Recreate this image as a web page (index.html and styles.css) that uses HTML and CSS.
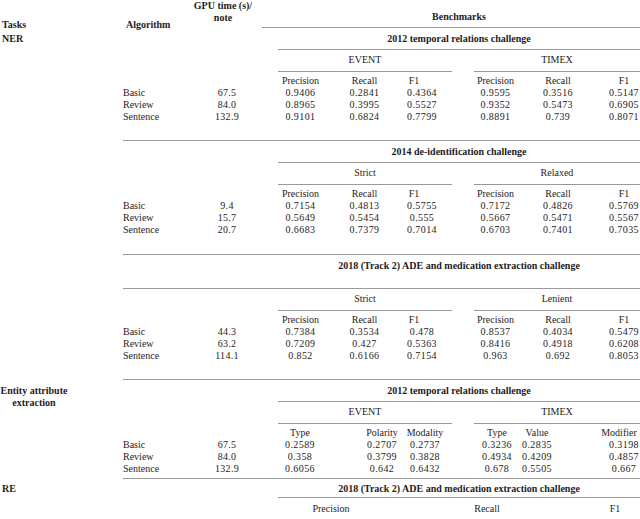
FILE: index.html
```html
<!DOCTYPE html>
<html lang="en">
<head>
<meta charset="utf-8">
<title>Benchmarks</title>
<link rel="stylesheet" href="styles.css">
</head>
<body>
<div class="tbl">
  <div class="head">
    <div class="h-task">Tasks</div>
    <div class="h-algo">Algorithm</div>
    <div class="h-gpu">GPU time (s)/<br>note</div>
    <div class="h-bench">Benchmarks</div>
  </div>

  <section class="block">
    <div class="grid cols-a pt2 pb17">
      <div class="task">NER</div>
      <div class="title line">2012 temporal relations challenge</div>
      <div class="group ga">EVENT</div>
      <div class="group gb">TIMEX</div>
      <div class="ch c1">Precision</div><div class="ch c2">Recall</div><div class="ch c3 f1h">F1</div>
      <div class="ch c4">Precision</div><div class="ch c5">Recall</div><div class="ch c6">F1</div>
      <div class="alg">Basic</div><div class="gpu">67.5</div>
      <div class="v c1">0.9406</div><div class="v c2">0.2841</div><div class="v c3">0.4364</div>
      <div class="v c4">0.9595</div><div class="v c5">0.3516</div><div class="v c6">0.5147</div>
      <div class="alg">Review</div><div class="gpu">84.0</div>
      <div class="v c1">0.8965</div><div class="v c2">0.3995</div><div class="v c3">0.5527</div>
      <div class="v c4">0.9352</div><div class="v c5">0.5473</div><div class="v c6">0.6905</div>
      <div class="alg">Sentence</div><div class="gpu">132.9</div>
      <div class="v c1">0.9101</div><div class="v c2">0.6824</div><div class="v c3">0.7799</div>
      <div class="v c4">0.8891</div><div class="v c5">0.739</div><div class="v c6">0.8071</div>
    </div>
  </section>

  <section class="block">
    <div class="rule"></div>
    <div class="grid cols-a pt5 pb18">
      <div class="title line">2014 de-identification challenge</div>
      <div class="group ga">Strict</div>
      <div class="group gb">Relaxed</div>
      <div class="ch c1">Precision</div><div class="ch c2">Recall</div><div class="ch c3 f1h">F1</div>
      <div class="ch c4">Precision</div><div class="ch c5">Recall</div><div class="ch c6">F1</div>
      <div class="alg">Basic</div><div class="gpu">9.4</div>
      <div class="v c1">0.7154</div><div class="v c2">0.4813</div><div class="v c3">0.5755</div>
      <div class="v c4">0.7172</div><div class="v c5">0.4826</div><div class="v c6">0.5769</div>
      <div class="alg">Review</div><div class="gpu">15.7</div>
      <div class="v c1">0.5649</div><div class="v c2">0.5454</div><div class="v c3">0.555</div>
      <div class="v c4">0.5667</div><div class="v c5">0.5471</div><div class="v c6">0.5567</div>
      <div class="alg">Sentence</div><div class="gpu">20.7</div>
      <div class="v c1">0.6683</div><div class="v c2">0.7379</div><div class="v c3">0.7014</div>
      <div class="v c4">0.6703</div><div class="v c5">0.7401</div><div class="v c6">0.7035</div>
    </div>
  </section>

  <section class="block">
    <div class="rule"></div>
    <div class="grid cols-a pt5 pb17">
      <div class="title">2018 (Track 2) ADE and medication extraction challenge</div>
      <div class="mid-rule"></div>
      <div class="group ga">Strict</div>
      <div class="group gb">Lenient</div>
      <div class="ch c1">Precision</div><div class="ch c2">Recall</div><div class="ch c3 f1h">F1</div>
      <div class="ch c4">Precision</div><div class="ch c5">Recall</div><div class="ch c6">F1</div>
      <div class="alg">Basic</div><div class="gpu">44.3</div>
      <div class="v c1">0.7384</div><div class="v c2">0.3534</div><div class="v c3">0.478</div>
      <div class="v c4">0.8537</div><div class="v c5">0.4034</div><div class="v c6">0.5479</div>
      <div class="alg">Review</div><div class="gpu">63.2</div>
      <div class="v c1">0.7209</div><div class="v c2">0.427</div><div class="v c3">0.5363</div>
      <div class="v c4">0.8416</div><div class="v c5">0.4918</div><div class="v c6">0.6208</div>
      <div class="alg">Sentence</div><div class="gpu">114.1</div>
      <div class="v c1">0.852</div><div class="v c2">0.6166</div><div class="v c3">0.7154</div>
      <div class="v c4">0.963</div><div class="v c5">0.692</div><div class="v c6">0.8053</div>
    </div>
  </section>

  <section class="block">
    <div class="rule"></div>
    <div class="grid cols-b pt5 pb3">
      <div class="task ent">Entity attribute<br>extraction</div>
      <div class="title line">2012 temporal relations challenge</div>
      <div class="group ga">EVENT</div>
      <div class="group gb">TIMEX</div>
      <div class="ch c1">Type</div><div class="ch c2">Polarity</div><div class="ch c3">Modality</div>
      <div class="ch c4">Type</div><div class="ch c5">Value</div><div class="ch c6 modh">Modifier</div>
      <div class="alg">Basic</div><div class="gpu">67.5</div>
      <div class="v c1">0.2589</div><div class="v c2">0.2707</div><div class="v c3">0.2737</div>
      <div class="v c4">0.3236</div><div class="v c5">0.2835</div><div class="v c6">0.3198</div>
      <div class="alg">Review</div><div class="gpu">84.0</div>
      <div class="v c1">0.358</div><div class="v c2">0.3799</div><div class="v c3">0.3828</div>
      <div class="v c4">0.4934</div><div class="v c5">0.4209</div><div class="v c6">0.4857</div>
      <div class="alg">Sentence</div><div class="gpu">132.9</div>
      <div class="v c1">0.6056</div><div class="v c2">0.642</div><div class="v c3">0.6432</div>
      <div class="v c4">0.678</div><div class="v c5">0.5505</div><div class="v c6">0.667</div>
    </div>
  </section>

  <section class="block">
    <div class="rule"></div>
    <div class="grid cols-r pt4">
      <div class="task">RE</div>
      <div class="title line tight">2018 (Track 2) ADE and medication extraction challenge</div>
      <div class="ch re c1">Precision</div><div class="ch re c2">Recall</div><div class="ch re c3">F1</div>
    </div>
  </section>
</div>
</body>
</html>
```
FILE: styles.css
```css
* {
  box-sizing: border-box;
  margin: 0;
  padding: 0;
}

html,
body {
  background: #ffffff;
}

body {
  width: 640px;
  overflow: hidden;
  font-family: "Liberation Serif", "Times New Roman", serif;
  font-size: 10px;
  line-height: 12px;
  color: #1f1c1c;
}

.tbl {
  width: 640px;
}

/* header */
.head {
  display: grid;
  grid-template-columns: 121px 70px 64px 7px 378px;
  font-weight: bold;
}

.h-task {
  padding: 19px 0 0 2px;
}

.h-algo {
  padding: 19px 0 0 5px;
}

.h-gpu {
  text-align: center;
  white-space: nowrap;
}

.h-bench {
  grid-column: 5;
  align-self: start;
  padding: 11px 0 4px 16px;
  border-bottom: 1px solid #999999;
  text-align: center;
}

/* blocks */
.rule {
  margin-left: 123px;
  border-top: 1px solid #999999;
}

.grid {
  display: grid;
}

.pt2 { padding-top: 2px; }
.pt4 { padding-top: 4px; }
.pt5 { padding-top: 5px; }
.pb3 { padding-bottom: 3px; }
.pb17 { padding-bottom: 17px; }
.pb18 { padding-bottom: 18px; }

.cols-a {
  grid-template-columns: 123px 72px 64px 19px 45px 83px 32px 14px 22px 43px 82px 41px;
}

.cols-b {
  grid-template-columns: 123px 72px 64px 19px 44px 40px 40px 46px 4px 22px 46px 34px 86px;
}

.cols-r {
  grid-template-columns: 123px 72px 64px 19px 106px 206px 50px;
}

.task {
  grid-column: 1;
  font-weight: bold;
  padding-left: 2px;
}

.task.ent {
  grid-row: span 2;
  width: 68px;
  padding-left: 0;
  text-align: center;
  white-space: nowrap;
}

.alg {
  grid-column: 2;
}

.gpu {
  grid-column: 3;
  text-align: center;
  letter-spacing: 0.3px;
}

.title {
  font-weight: bold;
  text-align: center;
  white-space: nowrap;
}

.cols-a .title { grid-column: 5 / 13; }
.cols-b .title { grid-column: 5 / 14; }
.cols-r .title { grid-column: 5 / 8; }

.title.line {
  padding-bottom: 4px;
  border-bottom: 1px solid #999999;
}

.title.line.tight {
  padding-bottom: 2px;
}

.mid-rule {
  grid-column: 2 / 13;
  height: 17px;
  border-bottom: 1px solid #999999;
}

.group {
  text-align: center;
  padding: 4px 0 5px;
  border-bottom: 1px solid #999999;
}

.cols-a .ga { grid-column: 5 / 9; }
.cols-a .gb { grid-column: 10 / 13; }
.cols-b .ga { grid-column: 5 / 10; }
.cols-b .gb { grid-column: 11 / 14; }

.ch {
  text-align: center;
  padding-top: 3px;
}

.ch.re {
  padding-top: 5px;
}

.v {
  text-align: center;
  letter-spacing: 0.4px;
}

/* column placement: NER-style blocks */
.cols-a .c1 { grid-column: 5; }
.cols-a .c2 { grid-column: 6; }
.cols-a .c3 { grid-column: 7; }
.cols-a .c4 { grid-column: 10; }
.cols-a .c5 { grid-column: 11; }
.cols-a .c6 { grid-column: 12; padding-left: 9px; }
.cols-a .f1h { padding-right: 16px; }

/* column placement: attribute block */
.cols-b .c1 { grid-column: 5; }
.cols-b .c2 { grid-column: 7; }
.cols-b .c3 { grid-column: 8; }
.cols-b .c4 { grid-column: 11; }
.cols-b .c5 { grid-column: 12; }
.cols-b .c6 { grid-column: 13; padding-left: 54px; }
.cols-b .c6.modh { padding-left: 44px; }

/* column placement: RE block */
.cols-r .c1 { grid-column: 5; }
.cols-r .c2 { grid-column: 6; }
.cols-r .c3 { grid-column: 7; }
```
